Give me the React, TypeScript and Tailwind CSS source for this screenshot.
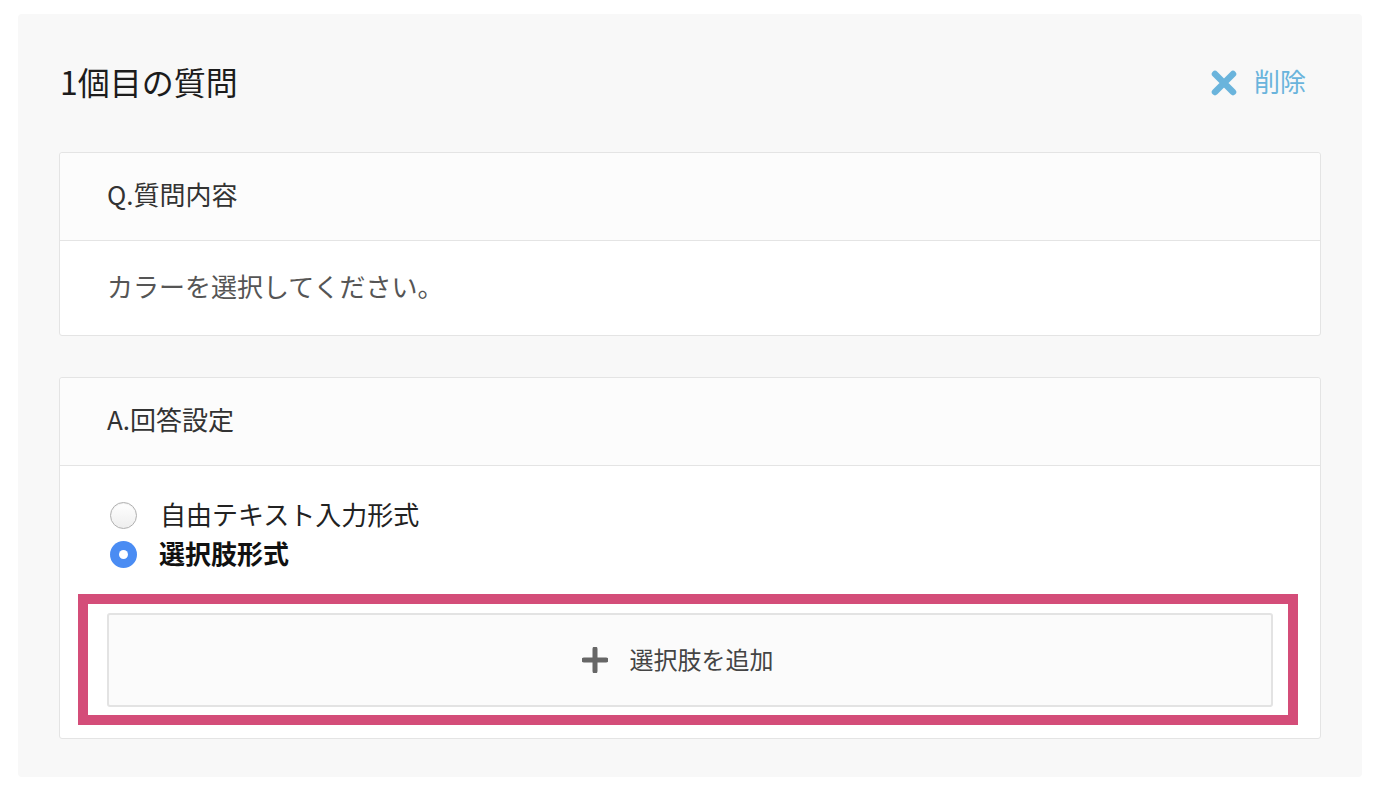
import React from "react";

const font = { fontFamily: '"Noto Sans CJK JP", "Noto Sans", sans-serif' };

export default function App() {
  return (
    <div className="min-h-screen bg-white pt-[14px] pl-[18px]" style={font}>
      <div className="w-[1344px] h-[763px] bg-[#f8f8f8] rounded-[4px] px-[41px] pt-[43px]">
        <div className="flex items-center justify-between h-[48px]">
          <h1 className="text-[32px] leading-[48px] text-[#1c1c1c] pl-[1px]">1個目の質問</h1>
          <button className="flex items-center gap-[17px] pr-[15px] text-[#6ab4dc]">
            <svg width="26" height="26" viewBox="0 0 26 26" className="mt-[4px]">
              <path d="M4 4 L22 22 M22 4 L4 22" stroke="#6ab4dc" strokeWidth="6.5" strokeLinecap="round" />
            </svg>
            <span className="text-[26px] leading-[40px]">削除</span>
          </button>
        </div>

        <div className="mt-[47px] border border-[#e4e4e4] rounded-[3px] bg-white">
          <div className="h-[88px] bg-[#fcfcfc] border-b border-[#e4e4e4] flex items-center px-[47px] pb-[5px] rounded-t-[3px]">
            <span className="text-[26px] leading-[36px] text-[#333]">Q.質問内容</span>
          </div>
          <div className="h-[94px] flex items-center px-[47px] pb-[5px]">
            <span className="text-[26px] leading-[36px] text-[#555]">カラーを選択してください。</span>
          </div>
        </div>

        <div className="mt-[41px] border border-[#e4e4e4] rounded-[3px] bg-white">
          <div className="h-[88px] bg-[#fcfcfc] border-b border-[#e4e4e4] flex items-center px-[47px] pb-[5px] rounded-t-[3px]">
            <span className="text-[26px] leading-[36px] text-[#333]">A.回答設定</span>
          </div>
          <div className="px-[47px] pt-[30px] pb-[31px]">
            <div className="flex flex-col">
              <label className="flex items-center h-[39px]">
                <span className="ml-[3px] w-[27px] h-[27px] rounded-full border border-[#b0b0b0] bg-gradient-to-b from-white to-[#eeeeee] shadow-[inset_0_1px_1px_rgba(0,0,0,0.06)]" />
                <span className="ml-[23px] text-[26px] leading-[39px] text-[#222] -mt-[4px]">自由テキスト入力形式</span>
              </label>
              <label className="flex items-center h-[39px]">
                <span className="ml-[3px] w-[27px] h-[27px] rounded-full bg-[#4a8cf3] flex items-center justify-center">
                  <span className="w-[9px] h-[9px] rounded-full bg-white" />
                </span>
                <span className="ml-[22px] text-[26px] leading-[39px] font-bold text-[#111] -mt-[4px]">選択肢形式</span>
              </label>
            </div>
            <div className="relative mt-[39px]">
              <div className="pointer-events-none absolute -left-[29px] -top-[19px] -right-[25px] -bottom-[18px] border-[10px] border-[#d44d79]" />
              <button className="w-full h-[94px] bg-[#fbfbfb] border-2 border-[#e3e3e3] rounded-[3px] flex items-center justify-center gap-[22px] pr-[25px]">
                <svg width="26" height="26" viewBox="0 0 26 26">
                  <path d="M13 2 L13 24 M2 13 L24 13" stroke="#666" strokeWidth="5" strokeLinecap="round" />
                </svg>
                <span className="text-[24px] leading-[34px] text-[#444] -mt-[2px]">選択肢を追加</span>
              </button>
            </div>
          </div>
        </div>
      </div>
    </div>
  );
}
